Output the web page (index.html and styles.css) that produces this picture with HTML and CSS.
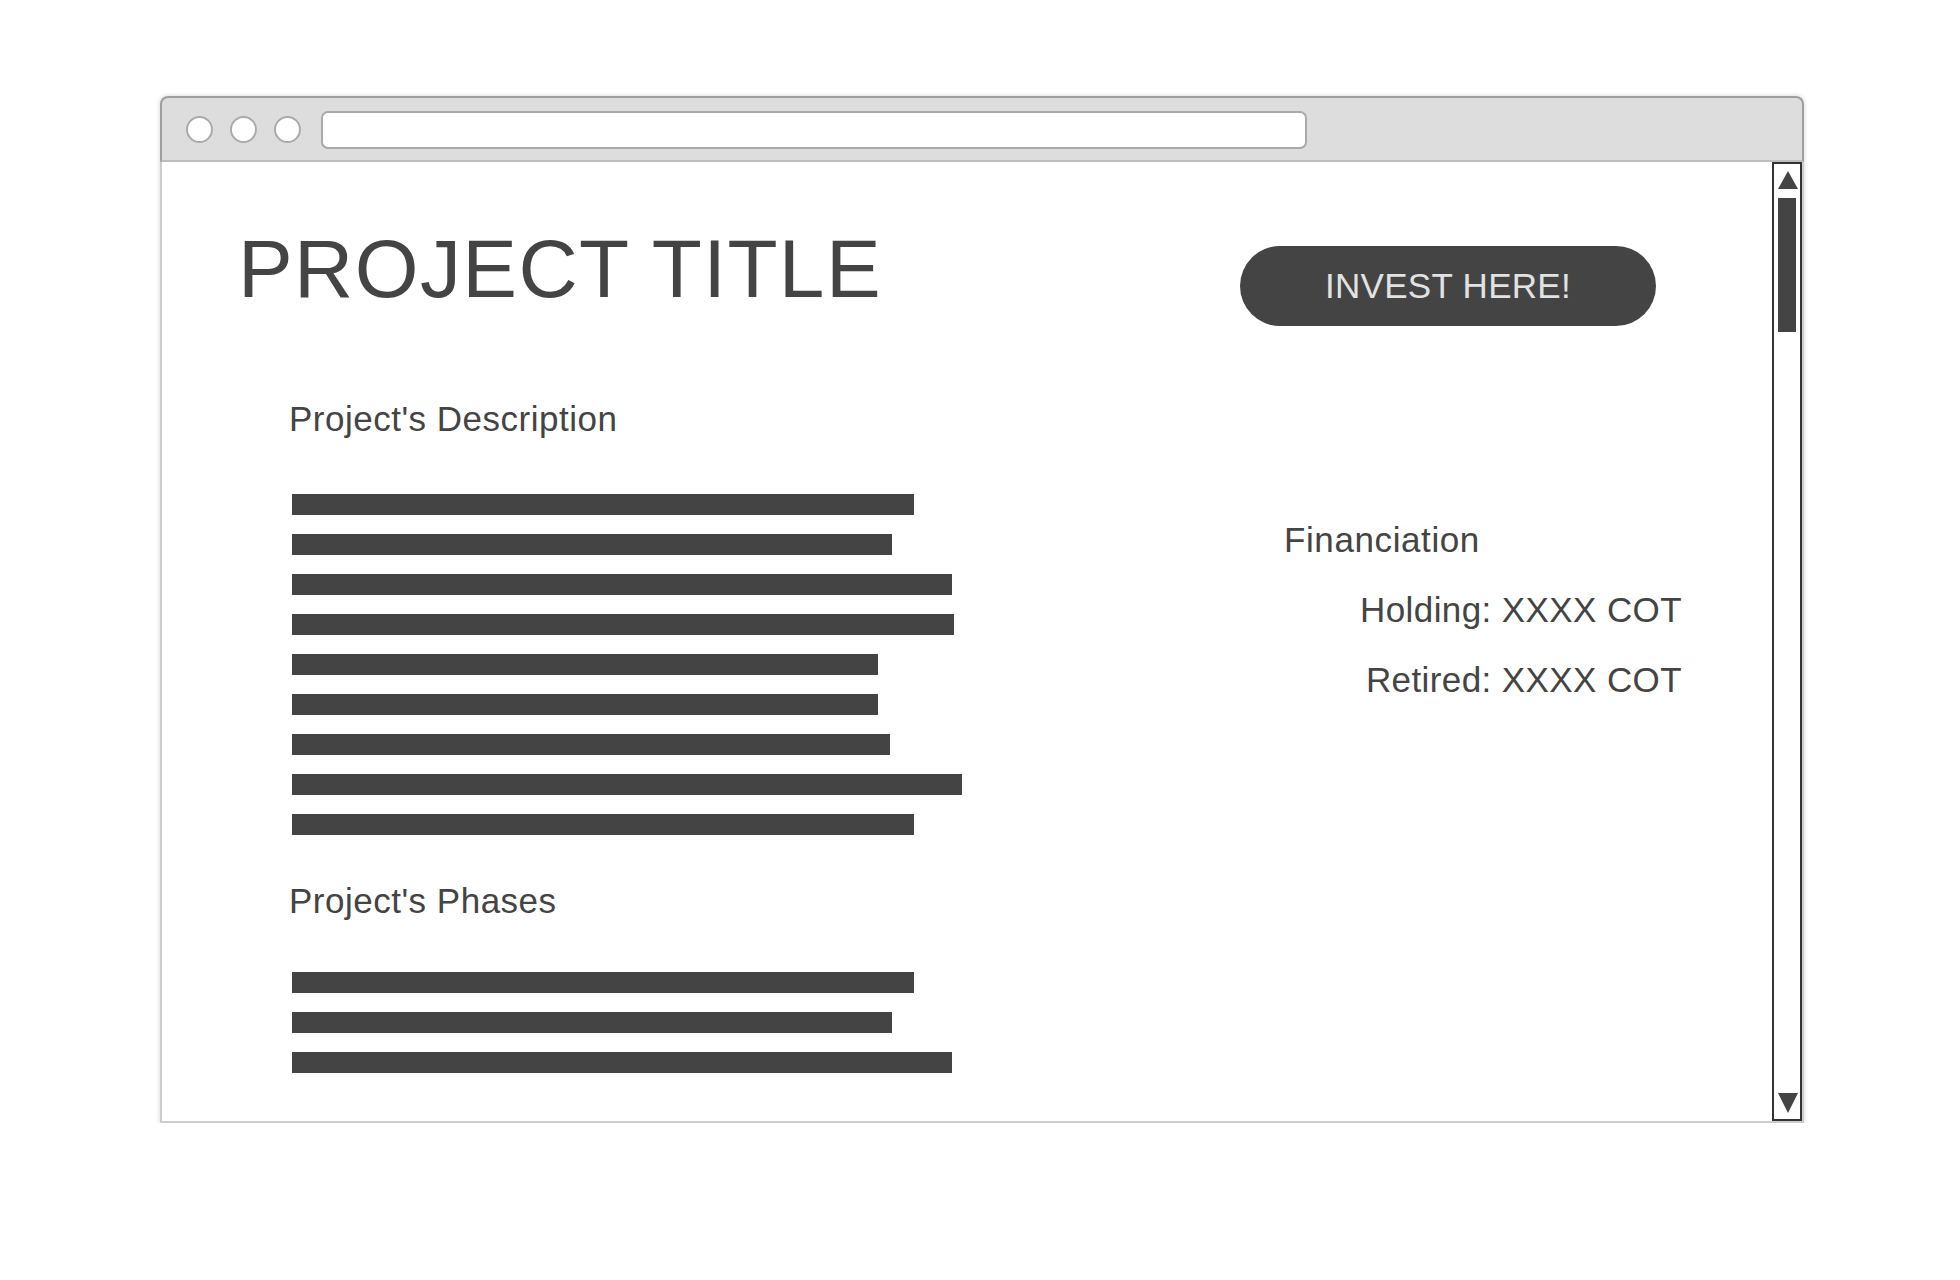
FILE: index.html
```html
<!DOCTYPE html>
<html lang="en">
<head>
<meta charset="utf-8">
<title>Project</title>
<link rel="stylesheet" href="styles.css">
</head>
<body>
<div class="page">
  <div class="window">
    <div class="titlebar">
      <span class="dot"></span>
      <span class="dot"></span>
      <span class="dot last"></span>
      <div class="url"></div>
    </div>
    <div class="content">
      <div class="main">
        <div class="left">
          <h1 class="title">PROJECT TITLE</h1>
          <h2 class="section-heading desc">Project's Description</h2>
          <div class="bars desc-bars">
            <div class="bar" style="width:622px"></div>
            <div class="bar" style="width:600px"></div>
            <div class="bar" style="width:660px"></div>
            <div class="bar" style="width:662px"></div>
            <div class="bar" style="width:586px"></div>
            <div class="bar" style="width:586px"></div>
            <div class="bar" style="width:598px"></div>
            <div class="bar" style="width:670px"></div>
            <div class="bar" style="width:622px"></div>
          </div>
          <h2 class="section-heading phases">Project's Phases</h2>
          <div class="bars phase-bars">
            <div class="bar" style="width:622px"></div>
            <div class="bar" style="width:600px"></div>
            <div class="bar" style="width:660px"></div>
          </div>
        </div>
        <aside class="aside">
          <button class="invest">INVEST HERE!</button>
          <div class="finance">
            <div class="fin-title">Financiation</div>
            <div class="fin-row">Holding: XXXX COT</div>
            <div class="fin-row">Retired: XXXX COT</div>
          </div>
        </aside>
      </div>
      <div class="scrollbar">
        <span class="arrow-up"></span>
        <span class="thumb"></span>
        <span class="arrow-down"></span>
      </div>
    </div>
  </div>
</div>
</body>
</html>
```
FILE: styles.css
```css
* { box-sizing: border-box; }

body {
  margin: 0;
  background: #ffffff;
  font-family: "Liberation Sans", Arial, sans-serif;
  color: #444444;
}

.page {
  padding: 96px 0 0 160px;
}

.window {
  width: 1644px;
  box-shadow: 0 0 5px rgba(0, 0, 0, 0.18);
  border-radius: 8px 8px 0 0;
}

.titlebar {
  height: 66px;
  display: flex;
  align-items: center;
  padding-left: 24px;
  background: #dddddd;
  border: 2px solid #9e9e9e;
  border-bottom-color: #bdbdbd;
  border-radius: 8px 8px 0 0;
}

.dot {
  width: 27px;
  height: 27px;
  border: 2px solid #aaaaaa;
  border-radius: 50%;
  background: #ffffff;
  margin-right: 17px;
  flex: none;
}

.dot.last {
  margin-right: 20px;
}

.url {
  width: 986px;
  height: 38px;
  border: 2px solid #aaaaaa;
  border-radius: 7px;
  background: #ffffff;
  margin-top: 2px;
}

.content {
  display: flex;
  height: 961px;
  background: #ffffff;
  border: 2px solid #cccccc;
  border-top: 0;
}

.main {
  flex: 1;
  display: flex;
  padding: 0 90px 0 76px;
}

.left {
  flex: 1;
  padding-top: 66px;
}

.title {
  margin: 0;
  font-size: 82px;
  line-height: 82px;
  font-weight: normal;
  letter-spacing: 1.4px;
  color: #444444;
  white-space: nowrap;
}

.section-heading {
  margin: 0 0 0 51px;
  font-size: 35px;
  line-height: 40px;
  font-weight: normal;
  letter-spacing: 0.5px;
  color: #444444;
}

.desc { margin-top: 89px; }
.phases { margin-top: 46px; }

.bars {
  display: flex;
  flex-direction: column;
  gap: 19px;
  margin-left: 54px;
}

.desc-bars { margin-top: 55px; }
.phase-bars { margin-top: 51px; }

.bar {
  height: 21px;
  background: #444444;
}

.aside {
  width: 442px;
  padding-top: 84px;
}

.invest {
  display: block;
  width: 416px;
  height: 80px;
  border: 0;
  border-radius: 40px;
  background: #444444;
  color: #e2e2e2;
  font-family: "Liberation Sans", Arial, sans-serif;
  font-size: 35px;
  letter-spacing: 0.3px;
  padding: 0;
}

.finance {
  margin-top: 179px;
  font-size: 35px;
  line-height: 70px;
  letter-spacing: 0.4px;
}

.fin-title {
  padding-left: 44px;
  letter-spacing: 0.6px;
}

.fin-row {
  text-align: right;
}

.scrollbar {
  width: 30px;
  border: 2px solid #333333;
  display: flex;
  flex-direction: column;
  padding: 7px 0 6px 4px;
}

.arrow-up {
  width: 0;
  height: 0;
  border-left: 10px solid transparent;
  border-right: 10px solid transparent;
  border-bottom: 18px solid #444444;
}

.thumb {
  width: 18px;
  height: 134px;
  margin-top: 9px;
  background: #444444;
}

.arrow-down {
  margin-top: auto;
  width: 0;
  height: 0;
  border-left: 10px solid transparent;
  border-right: 10px solid transparent;
  border-top: 20px solid #444444;
}
```
